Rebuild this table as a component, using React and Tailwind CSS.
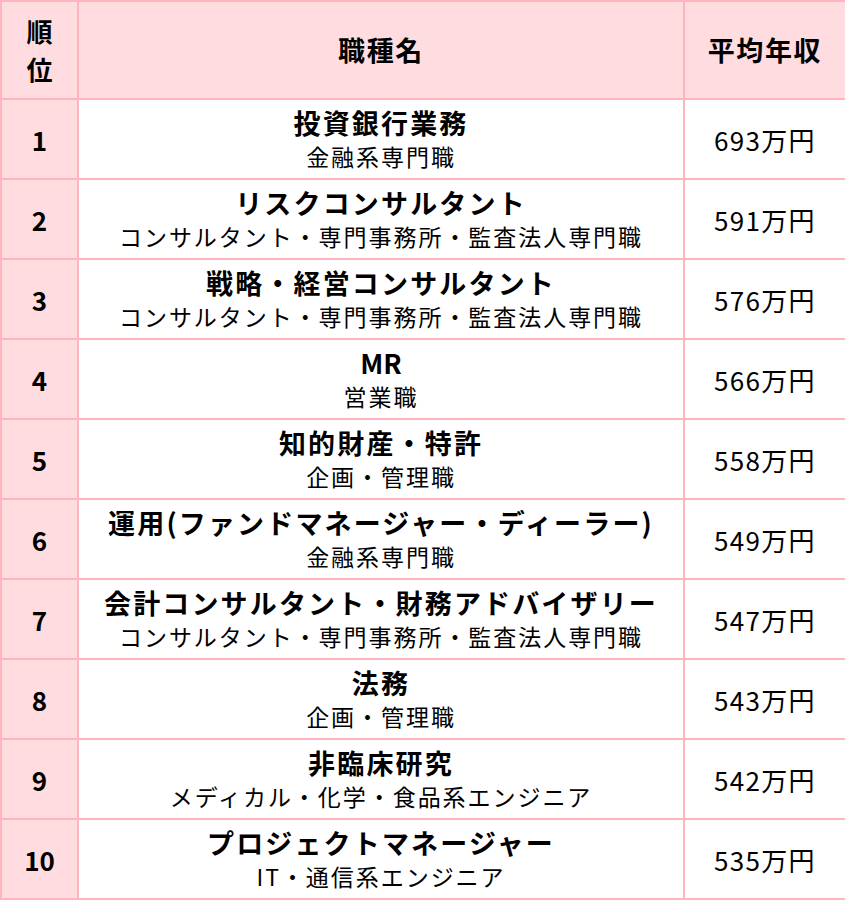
const rows = [
  ['1', '投資銀行業務', '金融系専門職', '693万円'],
  ['2', 'リスクコンサルタント', 'コンサルタント・専門事務所・監査法人専門職', '591万円'],
  ['3', '戦略・経営コンサルタント', 'コンサルタント・専門事務所・監査法人専門職', '576万円'],
  ['4', 'MR', '営業職', '566万円'],
  ['5', '知的財産・特許', '企画・管理職', '558万円'],
  ['6', '運用(ファンドマネージャー・ディーラー)', '金融系専門職', '549万円'],
  ['7', '会計コンサルタント・財務アドバイザリー', 'コンサルタント・専門事務所・監査法人専門職', '547万円'],
  ['8', '法務', '企画・管理職', '543万円'],
  ['9', '非臨床研究', 'メディカル・化学・食品系エンジニア', '542万円'],
  ['10', 'プロジェクトマネージャー', 'IT・通信系エンジニア', '535万円'],
]

export default function App() {
  return (
    <div className="w-[845px] bg-white text-black" style={{ fontFamily: '"Noto Sans CJK JP", "Noto Sans", sans-serif' }}>
      <table className="w-[845px] table-fixed border-collapse">
        <colgroup>
          <col className="w-[77px]" />
          <col className="w-[606px]" />
          <col className="w-[162px]" />
        </colgroup>
        <thead>
          <tr className="h-[98px] bg-[#ffdcdf]">
            <th className="border-2 border-[#ffb5bd] px-5 text-[26px] leading-[38px] font-bold">順位</th>
            <th className="border-2 border-[#ffb5bd] text-[27px] font-bold tracking-[0.06em]">職種名</th>
            <th className="border-2 border-[#ffb5bd] text-[27px] font-bold tracking-[0.06em]">平均年収</th>
          </tr>
        </thead>
        <tbody>
          {rows.map(([rank, title, sub, pay]) => (
            <tr key={rank} className="h-[80px]">
              <td className="border-2 border-[#ffb5bd] bg-[#ffdcdf] text-center text-[26px] font-bold">{rank}</td>
              <td className="border-2 border-[#ffb5bd] text-center">
                <div className={title === 'MR' ? 'text-[27px] font-bold leading-[34px]' : 'text-[27px] font-bold leading-[34px] tracking-[0.08em]'}>{title}</div>
                <div className="text-[23px] leading-[32px] tracking-[0.085em]">{sub}</div>
              </td>
              <td className="border-2 border-[#ffb5bd] text-center text-[26px] font-normal tracking-[0.05em]">{pay}</td>
            </tr>
          ))}
        </tbody>
      </table>
    </div>
  )
}
